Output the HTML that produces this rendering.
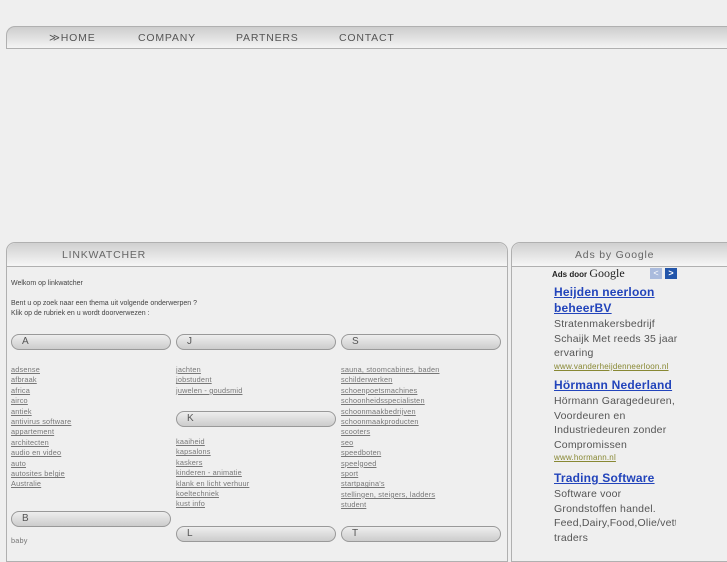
<!DOCTYPE html>
<html><head><meta charset="utf-8"><style>
*{margin:0;padding:0;box-sizing:border-box}
body{width:727px;height:545px;background:#efefef;font-family:"Liberation Sans",sans-serif;position:relative;overflow:hidden}
.nav{position:absolute;left:6px;top:26px;width:730px;height:23px;border:1px solid #b0b0b0;border-right:none;border-radius:9px 0 0 0;background:linear-gradient(#cdcdcd,#f4f4f4);}
.nav span{position:absolute;top:5px;font-size:10.5px;letter-spacing:0.8px;color:#555}
.panel{position:absolute;top:242px;border:1px solid #b0b0b0;border-radius:9px 9px 0 0;background:#efefef;height:320px}
.ph{height:24px;border-bottom:1px solid #b0b0b0;border-radius:9px 9px 0 0;background:linear-gradient(#d0d0d0,#f6f6f6);font-size:10.5px;letter-spacing:0.8px;color:#666;padding-top:6px}
.t{position:absolute;font-size:7px;color:#444;line-height:10px}
.pill{position:absolute;width:160px;height:16px;border:1px solid #999;border-radius:8px;background:linear-gradient(#eee,#ccc);font-size:10px;color:#555;padding:1px 0 0 10px}
.col{position:absolute;font-size:7.3px;letter-spacing:0.2px;line-height:10.4px;color:#777}
.col div{text-decoration:underline}
.ad{position:absolute;left:554px;font-size:10.5px;letter-spacing:0.2px;color:#555;line-height:14.6px}
.ad a{color:#2244bb;font-weight:bold;font-size:12px;line-height:16px;text-decoration:underline;display:block;margin-bottom:1px}
.ad u{color:#888833;font-size:8px;display:block;line-height:12px}
</style></head><body>
<div class="nav">
<span style="left:42px">≫HOME</span><span style="left:131px">COMPANY</span><span style="left:229px">PARTNERS</span><span style="left:332px">CONTACT</span>
</div>
<div class="panel" style="left:6px;width:502px"><div class="ph" style="padding-left:55px">LINKWATCHER</div></div>
<div class="panel" style="left:511px;width:230px"><div class="ph" style="padding-left:63px">Ads by Google</div></div>
<div class="t" style="left:11px;top:279px">Welkom op linkwatcher</div>
<div class="t" style="left:11px;top:299px">Bent u op zoek naar een thema uit volgende onderwerpen ?<br>Klik op de rubriek en u wordt doorverwezen :</div>
<div class="pill" style="left:11px;top:334px">A</div>
<div class="pill" style="left:176px;top:334px">J</div>
<div class="pill" style="left:341px;top:334px">S</div>
<div class="pill" style="left:176px;top:411px">K</div>
<div class="pill" style="left:11px;top:511px">B</div>
<div class="pill" style="left:176px;top:526px">L</div>
<div class="pill" style="left:341px;top:526px">T</div>
<div class="col" style="left:11px;top:365px"><div>adsense</div><div>afbraak</div><div>africa</div><div>airco</div><div>antiek</div><div>antivirus software</div><div>appartement</div><div>architecten</div><div>audio en video</div><div>auto</div><div>autosites belgie</div><div>Australie</div></div>
<div class="col" style="left:176px;top:365px"><div>jachten</div><div>jobstudent</div><div>juwelen - goudsmid</div></div>
<div class="col" style="left:176px;top:437px"><div>kaaiheid</div><div>kapsalons</div><div>kaskers</div><div>kinderen - animatie</div><div>klank en licht verhuur</div><div>koeltechniek</div><div>kust info</div></div>
<div class="col" style="left:341px;top:365px"><div>sauna, stoomcabines, baden</div><div>schilderwerken</div><div>schoenpoetsmachines</div><div>schoonheidsspecialisten</div><div>schoonmaakbedrijven</div><div>schoonmaakproducten</div><div>scooters</div><div>seo</div><div>speedboten</div><div>speelgoed</div><div>sport</div><div>startpagina's</div><div>stellingen, steigers, ladders</div><div>student</div></div>
<div class="col" style="left:11px;top:536px"><div style="text-decoration:none">baby</div></div>
<div style="position:absolute;left:552px;top:266px;font-size:8px;font-weight:bold;color:#222">Ads door <span style="font-family:'Liberation Serif',serif;font-size:12px;font-weight:normal">Google</span></div>
<div style="position:absolute;left:650px;top:268px;width:12px;height:11px;background:#aabbdd;color:#fff;font-size:9px;text-align:center;line-height:11px">&lt;</div>
<div style="position:absolute;left:665px;top:268px;width:12px;height:11px;background:#2255aa;color:#fff;font-size:9px;text-align:center;line-height:11px;font-weight:bold">&gt;</div>
<div class="ad" style="top:284px;width:128px"><a>Heijden neerloon beheerBV</a>Stratenmakersbedrijf Schaijk Met reeds 35 jaar ervaring<u>www.vanderheijdenneerloon.nl</u></div>
<div class="ad" style="top:377px;width:128px"><a>Hörmann Nederland</a>Hörmann Garagedeuren, Voordeuren en Industriedeuren zonder Compromissen<u>www.hormann.nl</u></div>
<div class="ad" style="top:470px;width:122px;overflow:hidden"><a>Trading Software</a>Software voor<br>Grondstoffen handel.<br><span style="white-space:nowrap">Feed,Dairy,Food,Olie/vette</span><br>traders</div>
</body></html>
